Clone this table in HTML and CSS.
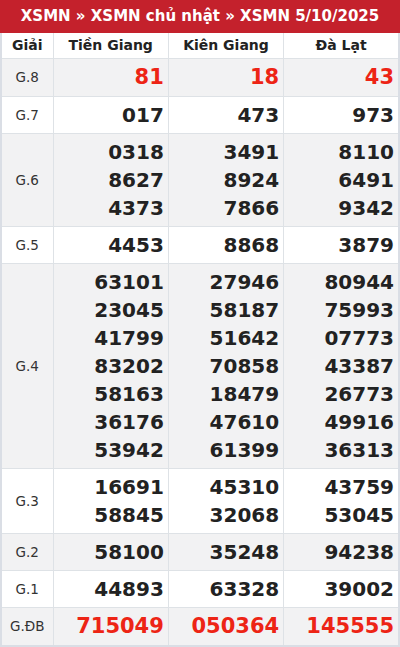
FILE: index.html
```html
<!DOCTYPE html>
<html lang="vi">
<head>
<meta charset="utf-8">
<title>XSMN 5/10/2025</title>
<link rel="stylesheet" href="styles.css">
</head>
<body>
<div class="box">
  <h1 class="title">XSMN » XSMN chủ nhật » XSMN 5/10/2025</h1>
  <table class="kq">
    <colgroup>
      <col class="c-giai"><col class="c-prov"><col class="c-prov"><col class="c-prov">
    </colgroup>
    <thead>
      <tr><th>Giải</th><th>Tiền Giang</th><th>Kiên Giang</th><th>Đà Lạt</th></tr>
    </thead>
    <tbody>
      <tr class="alt"><td class="g">G.8</td><td class="n red"><div>81</div></td><td class="n red"><div>18</div></td><td class="n red"><div>43</div></td></tr>
      <tr><td class="g">G.7</td><td class="n"><div>017</div></td><td class="n"><div>473</div></td><td class="n"><div>973</div></td></tr>
      <tr class="alt"><td class="g">G.6</td><td class="n"><div>0318</div><div>8627</div><div>4373</div></td><td class="n"><div>3491</div><div>8924</div><div>7866</div></td><td class="n"><div>8110</div><div>6491</div><div>9342</div></td></tr>
      <tr><td class="g">G.5</td><td class="n"><div>4453</div></td><td class="n"><div>8868</div></td><td class="n"><div>3879</div></td></tr>
      <tr class="alt"><td class="g">G.4</td>
        <td class="n"><div>63101</div><div>23045</div><div>41799</div><div>83202</div><div>58163</div><div>36176</div><div>53942</div></td>
        <td class="n"><div>27946</div><div>58187</div><div>51642</div><div>70858</div><div>18479</div><div>47610</div><div>61399</div></td>
        <td class="n"><div>80944</div><div>75993</div><div>07773</div><div>43387</div><div>26773</div><div>49916</div><div>36313</div></td></tr>
      <tr><td class="g">G.3</td><td class="n"><div>16691</div><div>58845</div></td><td class="n"><div>45310</div><div>32068</div></td><td class="n"><div>43759</div><div>53045</div></td></tr>
      <tr class="alt"><td class="g">G.2</td><td class="n"><div>58100</div></td><td class="n"><div>35248</div></td><td class="n"><div>94238</div></td></tr>
      <tr><td class="g">G.1</td><td class="n"><div>44893</div></td><td class="n"><div>63328</div></td><td class="n"><div>39002</div></td></tr>
      <tr class="alt"><td class="g">G.ĐB</td><td class="n red"><div>715049</div></td><td class="n red"><div>050364</div></td><td class="n red"><div>145555</div></td></tr>
    </tbody>
  </table>
</div>
</body>
</html>
```

FILE: styles.css
```css
* { box-sizing: border-box; }
html, body { margin: 0; padding: 0; background: #fff; }
body { font-family: "DejaVu Sans", Verdana, sans-serif; color: #222; }
.box { width: 400px; }
.title {
  margin: 0;
  background: #c4212c;
  color: #fff;
  font-size: 15px;
  font-weight: bold;
  text-align: center;
  height: 33px;
  line-height: 33px;
  white-space: nowrap;
}
.kq {
  width: 400px;
  border-collapse: collapse;
  table-layout: fixed;
  border: 2px solid #dadee5;
  border-top: none;
}
.c-giai { width: 52px; }
.kq th {
  font-size: 14px;
  font-weight: bold;
  color: #222;
  height: 25px;
  padding: 0 2px;
  border: 1px solid #dee2e6;
  border-top: none;
  background: #fff;
}
.kq td { border: 1px solid #dee2e6; padding: 4px 4px 4px 4px; }
.kq tr.alt td { background: #f2f2f3; }
.g { text-align: center; font-size: 13.5px; color: #333; }
.n { text-align: right; font-size: 20px; font-weight: bold; color: #222; line-height: 28px; }
.n.red { color: #ed2415; font-size: 21px; line-height: 29px; }
.kq td:first-child, .kq th:first-child { border-left: 2px solid #dadee5; }
.kq td:last-child, .kq th:last-child { border-right: 2px solid #dadee5; }
.kq tbody tr:last-child td { border-bottom: 2px solid #dadee5; }
```
